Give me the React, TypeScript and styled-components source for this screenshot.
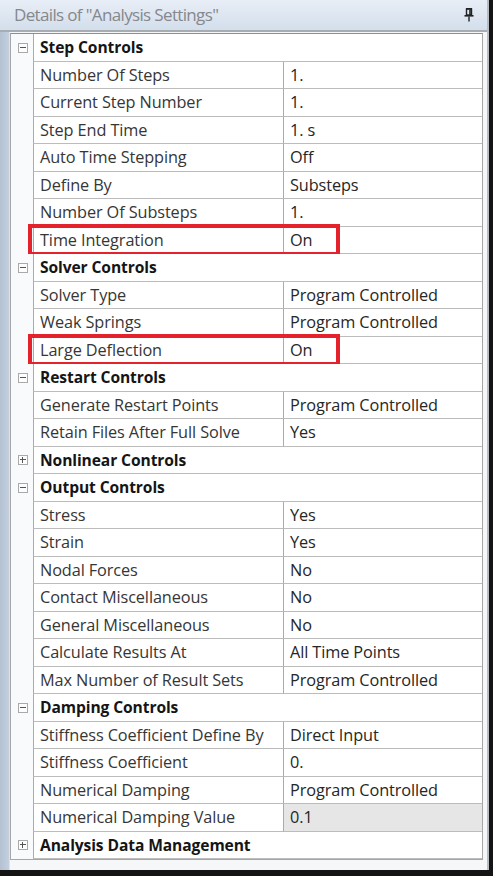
import React from 'react';
import styled, { createGlobalStyle } from 'styled-components';

const GlobalStyle = createGlobalStyle`
  html, body {
    margin: 0;
    padding: 0;
    background: #141414;
  }
  * {
    box-sizing: border-box;
  }
`;

const Panel = styled.div`
  width: 489px;
  height: 870px;
  display: flex;
  flex-direction: column;
  background: #f6f7f9;
  border-right: 2px solid #b9bcc0;
  font-family: 'Open Sans', 'Noto Sans', sans-serif;
`;

const TitleBar = styled.div`
  height: 32px;
  flex: none;
  display: flex;
  align-items: center;
  justify-content: space-between;
  padding: 0 13px 1px 14px;
  background: linear-gradient(180deg, #e8eef6 0%, #d3dfec 100%);
  border-bottom: 2px solid #a8adb3;
`;

const Title = styled.span`
  font-size: 17px;
  color: #85888c;
  letter-spacing: -0.65px;
`;

const Body = styled.div`
  flex: 1;
  padding: 1px 4px 0 10px;
  background: linear-gradient(90deg, #b3c1d3 0, #c4d0de 9px, #f6f7f9 10px);
`;

const Grid = styled.div`
  border: 1px solid #a6a6a6;
  border-top-color: #8e8e8e;
  background: #ffffff;
`;

const Row = styled.div`
  position: relative;
  display: grid;
  grid-template-columns: 22px 250px 1fr;
  height: 27.5px;
`;

const Gutter = styled.div`
  display: flex;
  align-items: center;
  justify-content: center;
  background: #f9fafb;
`;

const Expander = styled.div<{ $open: boolean }>`
  width: 10px;
  height: 10px;
  border: 1px solid #a9a9a9;
  background: #fdfdfd;
  position: relative;
  margin-left: 1px;

  &::before {
    content: '';
    position: absolute;
    left: 1px;
    right: 1px;
    top: 3px;
    height: 1px;
    background: #555;
  }

  &::after {
    content: '';
    display: ${(p) => (p.$open ? 'none' : 'block')};
    position: absolute;
    top: 1px;
    bottom: 1px;
    left: 3px;
    width: 1px;
    background: #555;
  }
`;

const Cell = styled.div<{ $shaded?: boolean }>`
  display: flex;
  align-items: center;
  padding-left: 6px;
  border-left: 1px solid #ababab;
  border-bottom: 1px solid #bcbcbc;
  font-size: 16.3px;
  letter-spacing: -0.1px;
  color: #363636;
  white-space: nowrap;
  overflow: hidden;
  background: ${(p) => (p.$shaded ? '#e6e6e6' : '#ffffff')};
`;

const ValueCell = styled(Cell)`
  color: #262626;
`;

const HeaderCell = styled(Cell)`
  grid-column: 2 / 4;
  font-size: 15.6px;
  font-weight: 700;
  color: #151515;
`;

const Highlight = styled.div`
  position: absolute;
  left: 17px;
  width: 312px;
  top: -3px;
  bottom: -2px;
  border: 4px solid #e3222b;
  pointer-events: none;
`;

const PinIcon = () => (
  <svg width="10" height="16" viewBox="0 0 10 16">
    <rect x="2" y="1" width="6" height="1.5" fill="#222" />
    <rect x="2.5" y="2" width="5" height="6" fill="none" stroke="#222" strokeWidth="1.4" />
    <rect x="5.2" y="2.5" width="1.6" height="5.5" fill="#222" />
    <rect x="0.5" y="8" width="9" height="1.6" fill="#222" />
    <rect x="4.3" y="9.5" width="1.4" height="5" fill="#222" />
  </svg>
);

type Item =
  | { kind: 'section'; name: string; open: boolean }
  | { kind: 'prop'; name: string; value: string; mark?: boolean; shaded?: boolean };

const items: Item[] = [
  { kind: 'section', name: 'Step Controls', open: true },
  { kind: 'prop', name: 'Number Of Steps', value: '1.' },
  { kind: 'prop', name: 'Current Step Number', value: '1.' },
  { kind: 'prop', name: 'Step End Time', value: '1. s' },
  { kind: 'prop', name: 'Auto Time Stepping', value: 'Off' },
  { kind: 'prop', name: 'Define By', value: 'Substeps' },
  { kind: 'prop', name: 'Number Of Substeps', value: '1.' },
  { kind: 'prop', name: 'Time Integration', value: 'On', mark: true },
  { kind: 'section', name: 'Solver Controls', open: true },
  { kind: 'prop', name: 'Solver Type', value: 'Program Controlled' },
  { kind: 'prop', name: 'Weak Springs', value: 'Program Controlled' },
  { kind: 'prop', name: 'Large Deflection', value: 'On', mark: true },
  { kind: 'section', name: 'Restart Controls', open: true },
  { kind: 'prop', name: 'Generate Restart Points', value: 'Program Controlled' },
  { kind: 'prop', name: 'Retain Files After Full Solve', value: 'Yes' },
  { kind: 'section', name: 'Nonlinear Controls', open: false },
  { kind: 'section', name: 'Output Controls', open: true },
  { kind: 'prop', name: 'Stress', value: 'Yes' },
  { kind: 'prop', name: 'Strain', value: 'Yes' },
  { kind: 'prop', name: 'Nodal Forces', value: 'No' },
  { kind: 'prop', name: 'Contact Miscellaneous', value: 'No' },
  { kind: 'prop', name: 'General Miscellaneous', value: 'No' },
  { kind: 'prop', name: 'Calculate Results At', value: 'All Time Points' },
  { kind: 'prop', name: 'Max Number of Result Sets', value: 'Program Controlled' },
  { kind: 'section', name: 'Damping Controls', open: true },
  { kind: 'prop', name: 'Stiffness Coefficient Define By', value: 'Direct Input' },
  { kind: 'prop', name: 'Stiffness Coefficient', value: '0.' },
  { kind: 'prop', name: 'Numerical Damping', value: 'Program Controlled' },
  { kind: 'prop', name: 'Numerical Damping Value', value: '0.1', shaded: true },
  { kind: 'section', name: 'Analysis Data Management', open: false },
];

const App: React.FC = () => {
  return (
    <>
      <GlobalStyle />
      <Panel>
        <TitleBar>
          <Title>Details of "Analysis Settings"</Title>
          <PinIcon />
        </TitleBar>
        <Body>
          <Grid>
            {items.map((item, i) =>
              item.kind === 'section' ? (
                <Row key={i}>
                  <Gutter>
                    <Expander $open={item.open} />
                  </Gutter>
                  <HeaderCell>{item.name}</HeaderCell>
                </Row>
              ) : (
                <Row key={i}>
                  <Gutter />
                  <Cell>{item.name}</Cell>
                  <ValueCell $shaded={item.shaded}>{item.value}</ValueCell>
                  {item.mark && <Highlight />}
                </Row>
              )
            )}
          </Grid>
        </Body>
      </Panel>
    </>
  );
};

export default App;
